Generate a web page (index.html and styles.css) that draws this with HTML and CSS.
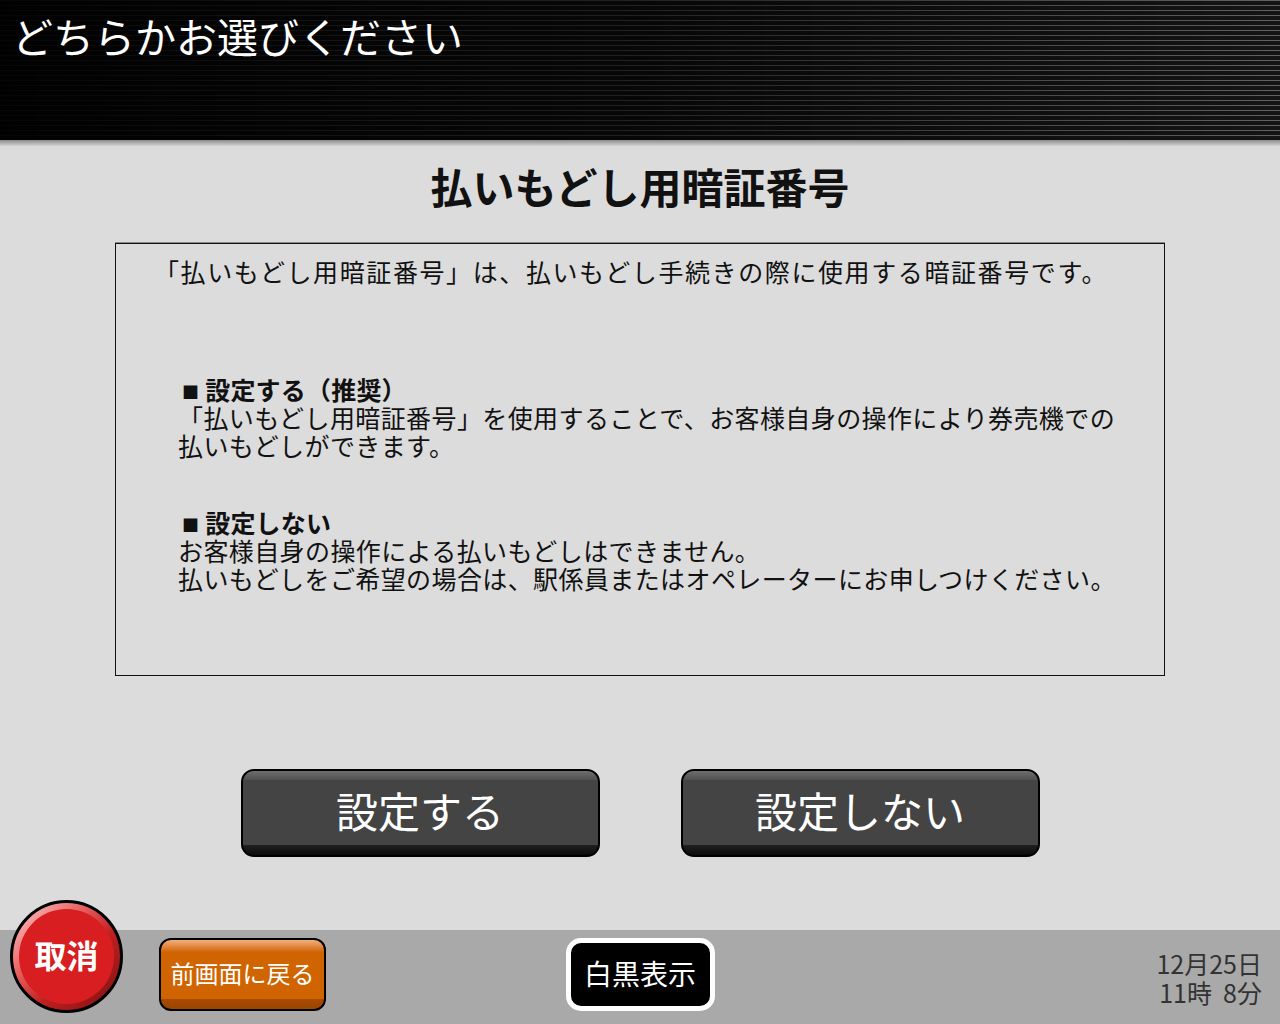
FILE: index.html
```html
<!DOCTYPE html>
<html lang="ja">
<head>
<meta charset="utf-8">
<title>払いもどし用暗証番号</title>
<link rel="stylesheet" href="styles.css">
</head>
<body>
<div class="screen">
  <header class="topbar">
    <h1 class="prompt">どちらかお選びください</h1>
  </header>
  <div class="topband"></div>
  <main class="main">
    <h2 class="title">払いもどし用暗証番号</h2>
    <section class="infobox">
      <p class="lead">「払いもどし用暗証番号」は、払いもどし手続きの際に使用する暗証番号です。</p>
      <div class="option option-first">
        <p class="option-head"><span class="sq">■</span>設定する（推奨）</p>
        <p class="option-line">「払いもどし用暗証番号」を使用することで、お客様自身の操作により券売機での</p>
        <p class="option-line">払いもどしができます。</p>
      </div>
      <div class="option option-second">
        <p class="option-head"><span class="sq">■</span>設定しない</p>
        <p class="option-line">お客様自身の操作による払いもどしはできません。</p>
        <p class="option-line">払いもどしをご希望の場合は、駅係員またはオペレーターにお申しつけください。</p>
      </div>
    </section>
    <div class="choices">
      <button class="choice">設定する</button>
      <button class="choice">設定しない</button>
    </div>
  </main>
  <footer class="footer">
    <button class="cancel"><span class="cancel-face">取消</span></button>
    <div class="foot-left">
      <button class="back">前画面に戻る</button>
    </div>
    <div class="foot-center">
      <button class="mono">白黒表示</button>
    </div>
    <div class="foot-right">
      <div class="clock">
        <div>12月25日</div>
        <div>11時&nbsp;&nbsp;8分</div>
      </div>
    </div>
  </footer>
</div>
</body>
</html>
```

FILE: styles.css
```css
* { box-sizing: border-box; }

html, body {
  margin: 0;
  padding: 0;
}

body {
  width: 1280px;
  height: 1024px;
  overflow: hidden;
  background: #dcdcdc;
  font-family: "Noto Sans CJK JP", "Noto Sans", sans-serif;
  color: #111;
}

.screen {
  width: 1280px;
  height: 1024px;
  display: flex;
  flex-direction: column;
}

.topbar {
  height: 140px;
  flex: none;
  padding: 11px 0 0 12px;
  background:
    linear-gradient(to right, rgba(0,0,0,0.94) 0%, rgba(0,0,0,0.65) 50%, rgba(0,0,0,0) 100%),
    repeating-linear-gradient(to bottom, #626262 0px, #626262 1px, #141414 1px, #141414 5px);
}

.prompt {
  margin: 0;
  font-size: 41px;
  line-height: 48px;
  font-weight: normal;
  color: #fff;
}

.topband {
  height: 6px;
  flex: none;
  background: linear-gradient(to bottom, #8c8c8c, #d2d2d2);
}

.main {
  flex: 1;
  display: flex;
  flex-direction: column;
  align-items: center;
}

.title {
  margin: 15px 0 0 0;
  font-size: 42px;
  line-height: 50px;
  font-weight: bold;
  color: #111;
}

.infobox {
  margin-top: 32px;
  width: 1050px;
  height: 433px;
  border: 1px solid #111;
  box-shadow: 0 -1px 0 #8a8a8a;
  padding: 13px 0 0 0;
}

.infobox p {
  margin: 0;
  font-size: 25px;
  line-height: 28px;
  white-space: nowrap;
  letter-spacing: 0.4px;
}

.infobox .lead {
  padding-left: 38px;
  letter-spacing: 1.6px;
}

.option {
  padding-left: 62px;
}

.option-first { margin-top: 90px; }
.option-second { margin-top: 49px; }

.infobox .option-head {
  font-weight: bold;
  letter-spacing: 0.2px;
}

.sq {
  font-size: 17px;
  line-height: 0;
  margin: 0 6px 0 4px;
  vertical-align: 1px;
}

.choices {
  margin-top: 93px;
  display: flex;
  gap: 81px;
}

.choice {
  width: 359px;
  height: 88px;
  border: 2px solid #000;
  border-radius: 13px;
  background: linear-gradient(to bottom,
    #6e6e6e 0px, #505050 9px, #444 9px, #444 calc(100% - 10px),
    #202020 calc(100% - 10px), #0c0c0c 100%);
  color: #fff;
  font-family: inherit;
  font-size: 42px;
  line-height: 1;
  padding: 0 0 6px 0;
  cursor: pointer;
}

.footer {
  position: relative;
  height: 94px;
  flex: none;
  background: #a9a9a9;
  display: grid;
  grid-template-columns: 1fr auto 1fr;
  align-items: start;
}

.cancel {
  position: absolute;
  left: 10px;
  top: -30px;
  width: 113px;
  height: 113px;
  border-radius: 50%;
  border: 3px solid #000;
  padding: 6px;
  background: linear-gradient(135deg, #ffd0d0 0%, #e86060 35%, #c02020 60%, #7a1010 100%);
  cursor: pointer;
}

.cancel-face {
  display: flex;
  align-items: center;
  justify-content: center;
  width: 100%;
  height: 100%;
  border-radius: 50%;
  background: #d81e21;
  color: #fff;
  font-family: "Noto Sans CJK JP", sans-serif;
  font-size: 32px;
  font-weight: bold;
  padding-bottom: 6px;
}

.foot-left {
  padding: 8px 0 0 159px;
}

.back {
  width: 167px;
  height: 73px;
  border: 2px solid #000;
  border-radius: 12px;
  background: linear-gradient(to bottom,
    #f2b07a 0px, #d87020 10px, #d06400 12px, #d06400 calc(100% - 10px),
    #a84c00 calc(100% - 10px), #9a4400 100%);
  color: #fff;
  font-family: inherit;
  font-size: 24px;
  line-height: 1;
  padding: 0 0 4px 0;
  cursor: pointer;
}

.foot-center {
  padding-top: 8px;
}

.mono {
  width: 149px;
  height: 73px;
  border: 5px solid #fff;
  border-radius: 15px;
  background: #000;
  color: #fff;
  font-family: inherit;
  font-size: 28px;
  line-height: 1;
  padding: 0 0 4px 0;
  cursor: pointer;
}

.foot-right {
  display: flex;
  justify-content: flex-end;
  padding: 19px 18px 0 0;
}

.clock {
  font-size: 25px;
  line-height: 29px;
  color: #333;
  text-align: right;
  white-space: nowrap;
}
```
